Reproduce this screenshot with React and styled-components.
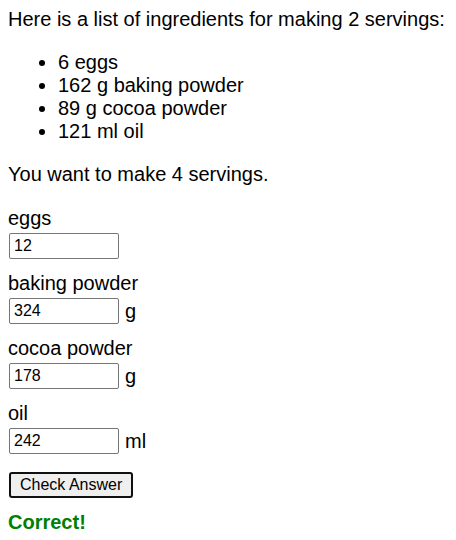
import styled, { createGlobalStyle } from "styled-components";

const GlobalStyle = createGlobalStyle`
  body {
    margin: 8px;
    background: #ffffff;
    color: #000000;
    font-family: "Liberation Sans", Arial, sans-serif;
    font-size: 20px;
  }
`;

const Page = styled.div`
  line-height: 23px;
`;

const Intro = styled.p`
  margin: 0 0 20px;
`;

const IngredientList = styled.ul`
  margin: 0 0 20px;
  padding-left: 50px;
`;

const Target = styled.p`
  margin: 0 0 21px;
`;

const Field = styled.div`
  margin-bottom: 13px;
`;

const Label = styled.label`
  display: block;
  margin-bottom: 3px;
`;

const Row = styled.div`
  display: flex;
  align-items: center;
  gap: 6px;
  height: 26px;
`;

const Amount = styled.input`
  box-sizing: border-box;
  width: 110px;
  height: 26px;
  margin: 0 0 0 1px;
  padding: 1px 4px;
  border: 1px solid #767676;
  border-radius: 2px;
  font-family: "Liberation Sans", Arial, sans-serif;
  font-size: 16px;
  color: #000000;
`;

const CheckButton = styled.button`
  box-sizing: border-box;
  height: 26px;
  margin: 5px 0 0 1px;
  padding: 0 9px;
  border: 2px solid #101010;
  border-radius: 3px;
  background: #efefef;
  font-family: "Liberation Sans", Arial, sans-serif;
  font-size: 16px;
  color: #000000;
`;

const Result = styled.p`
  margin: 13px 0 0;
  font-weight: bold;
  color: #008000;
`;

const ingredients = [
  { name: "eggs", amount: 6, unit: "" },
  { name: "baking powder", amount: 162, unit: "g" },
  { name: "cocoa powder", amount: 89, unit: "g" },
  { name: "oil", amount: 121, unit: "ml" },
];

function App() {
  const base = 2;
  const wanted = 4;

  return (
    <Page>
      <GlobalStyle />
      <Intro>Here is a list of ingredients for making {base} servings:</Intro>
      <IngredientList>
        {ingredients.map((item) => (
          <li key={item.name}>
            {item.amount} {item.unit ? `${item.unit} ` : ""}
            {item.name}
          </li>
        ))}
      </IngredientList>
      <Target>You want to make {wanted} servings.</Target>
      {ingredients.map((item) => (
        <Field key={item.name}>
          <Label htmlFor={item.name}>{item.name}</Label>
          <Row>
            <Amount
              id={item.name}
              defaultValue={(item.amount * wanted) / base}
            />
            {item.unit && <span>{item.unit}</span>}
          </Row>
        </Field>
      ))}
      <CheckButton>Check Answer</CheckButton>
      <Result>Correct!</Result>
    </Page>
  );
}

export default App;
